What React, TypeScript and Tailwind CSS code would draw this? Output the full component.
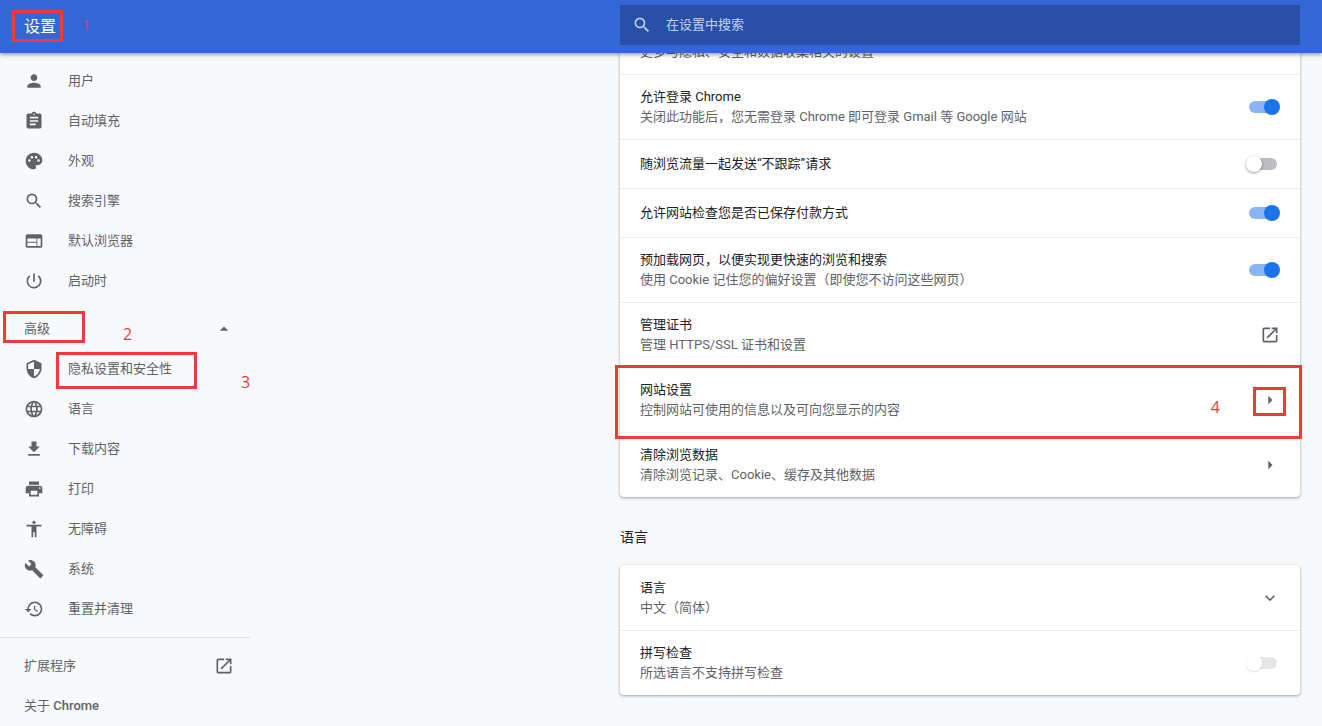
import React from "react";
import type { IconType } from "react-icons";
import {
  MdPerson,
  MdAssignment,
  MdPalette,
  MdSearch,
  MdWeb,
  MdPowerSettingsNew,
  MdArrowDropUp,
  MdArrowRight,
  MdSecurity,
  MdLanguage,
  MdFileDownload,
  MdPrint,
  MdAccessibility,
  MdBuild,
  MdRestore,
  MdLaunch,
  MdExpandMore,
} from "react-icons/md";

const basicItems: { label: string; icon: IconType }[] = [
  { label: "用户", icon: MdPerson },
  { label: "自动填充", icon: MdAssignment },
  { label: "外观", icon: MdPalette },
  { label: "搜索引擎", icon: MdSearch },
  { label: "默认浏览器", icon: MdWeb },
  { label: "启动时", icon: MdPowerSettingsNew },
];

const advancedItems: { label: string; icon: IconType; step?: string }[] = [
  { label: "隐私设置和安全性", icon: MdSecurity, step: "3" },
  { label: "语言", icon: MdLanguage },
  { label: "下载内容", icon: MdFileDownload },
  { label: "打印", icon: MdPrint },
  { label: "无障碍", icon: MdAccessibility },
  { label: "系统", icon: MdBuild },
  { label: "重置并清理", icon: MdRestore },
];

function Mark({ className }: { className: string }) {
  return (
    <span
      aria-hidden="true"
      className={`pointer-events-none absolute z-10 border-3 border-[#f03a3a] ${className}`}
    />
  );
}

function Step({ n, className }: { n: string; className: string }) {
  return (
    <span
      className={`pointer-events-none absolute z-10 font-['Open_Sans',sans-serif] ${className}`}
    >
      {n}
    </span>
  );
}

function NavItem({ label, icon: Icon, step }: { label: string; icon: IconType; step?: string }) {
  return (
    <a href="#" className="relative flex h-10 items-center gap-6 pl-6">
      <Icon className="size-5 shrink-0" />
      <span>{label}</span>
      {step && (
        <>
          <Mark className="top-[3px] left-14 h-[37px] w-[141px]" />
          <Step n={step} className="top-[21px] left-[241px] text-base leading-6 text-[#f03a3a]" />
        </>
      )}
    </a>
  );
}

function Row({
  id,
  title,
  sub,
  children,
}: {
  id?: string;
  title?: string;
  sub?: string;
  children?: React.ReactNode;
}) {
  return (
    <div
      className={`relative flex items-center justify-between border-t border-[#eeeeee] px-5 first:border-t-0 ${
        sub ? "min-h-[65px]" : "min-h-[49px]"
      }`}
    >
      <div className="leading-5">
        {id ? (
          <label htmlFor={id} className="block text-[#202124]">
            {title}
          </label>
        ) : (
          <div className="min-h-5 text-[#202124]">{title}</div>
        )}
        {sub && <div className="text-[#5f6368]">{sub}</div>}
      </div>
      {children}
    </div>
  );
}

function Toggle({ id, on, disabled }: { id: string; on?: boolean; disabled?: boolean }) {
  return (
    <input
      id={id}
      type="checkbox"
      role="switch"
      defaultChecked={on}
      disabled={disabled}
      className="relative mx-[3px] h-3 w-7 shrink-0 appearance-none rounded-full bg-[#bdbdc1] before:absolute before:-top-0.5 before:-left-[3px] before:size-4 before:rounded-full before:bg-white before:shadow-[0_1px_3px_rgba(0,0,0,0.4)] checked:bg-[#8ab4f8] checked:before:left-[15px] checked:before:bg-[#1a73e8] checked:before:shadow-none disabled:bg-[#e6e6e7] disabled:before:shadow-[0_1px_2px_rgba(0,0,0,0.12)]"
    />
  );
}

function IconButton({ label, icon: Icon }: { label: string; icon: IconType }) {
  return (
    <button type="button" aria-label={label} className="shrink-0 text-[#5f6368]">
      <Icon className="size-5" />
    </button>
  );
}

const card = "rounded bg-white shadow-[0_1px_2px_rgba(60,64,67,0.3),0_1px_3px_1px_rgba(60,64,67,0.15)]";

export default function App() {
  return (
    <div className="flex h-screen flex-col overflow-hidden bg-[#f8f9fa] font-[Roboto,'Noto_Sans_CJK_SC',sans-serif] text-[13px]">
      <header className="relative z-20 flex shrink-0 items-center justify-between bg-[#3367d6] pt-[5px] pr-[22px] pb-2 pl-6 shadow-[0_2px_4px_rgba(0,0,0,0.35)]">
        <div className="relative pt-1 text-white">
          <h1 className="text-base leading-6">设置</h1>
          <Mark className="-top-px -left-3 h-8 w-[51px]" />
          <Step n="1" className="top-0.5 left-[58px] text-sm leading-6 text-[#d0406e]" />
        </div>
        <div className="flex h-10 w-full max-w-[680px] items-center gap-3.5 bg-[#2850a7] pl-3 text-[#c2d1f2]">
          <MdSearch className="size-5 shrink-0" />
          <input
            type="search"
            aria-label="在设置中搜索"
            placeholder="在设置中搜索"
            className="min-w-0 flex-1 bg-transparent outline-none placeholder:text-[#c2d1f2]"
          />
        </div>
      </header>

      <div className="flex min-h-0 flex-1 justify-between">
        <nav className="w-[250px] shrink-0 pt-2 text-[#5f6368]">
          {basicItems.map((item) => (
            <NavItem key={item.label} {...item} />
          ))}
          <button
            type="button"
            aria-expanded="true"
            className="relative mt-2 flex h-10 w-full items-center justify-between pr-4 pl-6"
          >
            <span>高级</span>
            <MdArrowDropUp className="size-5" />
            <Mark className="top-0.5 left-[3px] h-8 w-[82px]" />
            <Step n="2" className="top-[13px] left-[123px] text-base leading-6 text-[#f03a3a]" />
          </button>
          {advancedItems.map((item) => (
            <NavItem key={item.label} {...item} />
          ))}
          <hr className="my-2 border-[#dfe0e2]" />
          <a href="#" className="flex h-10 items-center justify-between pr-4 pl-6">
            <span>扩展程序</span>
            <MdLaunch className="size-5" />
          </a>
          <a href="#" className="flex h-10 items-center pl-6">
            <span>
              关于 <span className="font-medium">Chrome</span>
            </span>
          </a>
        </nav>

        <main className="flex-1 overflow-hidden">
          <div className="-mt-11 mr-[22px] ml-auto max-w-[680px]">
            <section className={card}>
              <Row sub="更多与隐私、安全和数据收集相关的设置" />
              <Row id="signin" title="允许登录 Chrome" sub="关闭此功能后，您无需登录 Chrome 即可登录 Gmail 等 Google 网站">
                <Toggle id="signin" on />
              </Row>
              <Row id="dnt" title="随浏览流量一起发送“不跟踪”请求">
                <Toggle id="dnt" />
              </Row>
              <Row id="payment" title="允许网站检查您是否已保存付款方式">
                <Toggle id="payment" on />
              </Row>
              <Row id="preload" title="预加载网页，以便实现更快速的浏览和搜索" sub="使用 Cookie 记住您的偏好设置（即使您不访问这些网页）">
                <Toggle id="preload" on />
              </Row>
              <Row title="管理证书" sub="管理 HTTPS/SSL 证书和设置">
                <IconButton label="管理证书" icon={MdLaunch} />
              </Row>
              <Row title="网站设置" sub="控制网站可使用的信息以及可向您显示的内容">
                <IconButton label="网站设置" icon={MdArrowRight} />
                <Mark className="-top-[3px] -right-0.5 -left-[5px] h-[74px]" />
                <Mark className="top-[19px] right-3.5 h-[29px] w-[33px]" />
                <Step n="4" className="top-[27px] right-20 text-base leading-6 text-[#f03a3a]" />
              </Row>
              <Row title="清除浏览数据" sub="清除浏览记录、Cookie、缓存及其他数据">
                <IconButton label="清除浏览数据" icon={MdArrowRight} />
              </Row>
            </section>

            <h2 className="pt-[30px] pb-[18px] text-sm leading-5 text-[#202124]">语言</h2>
            <section className={card}>
              <Row title="语言" sub="中文（简体）">
                <IconButton label="展开语言" icon={MdExpandMore} />
              </Row>
              <Row id="spell" title="拼写检查" sub="所选语言不支持拼写检查">
                <Toggle id="spell" disabled />
              </Row>
            </section>
          </div>
        </main>
      </div>
    </div>
  );
}
